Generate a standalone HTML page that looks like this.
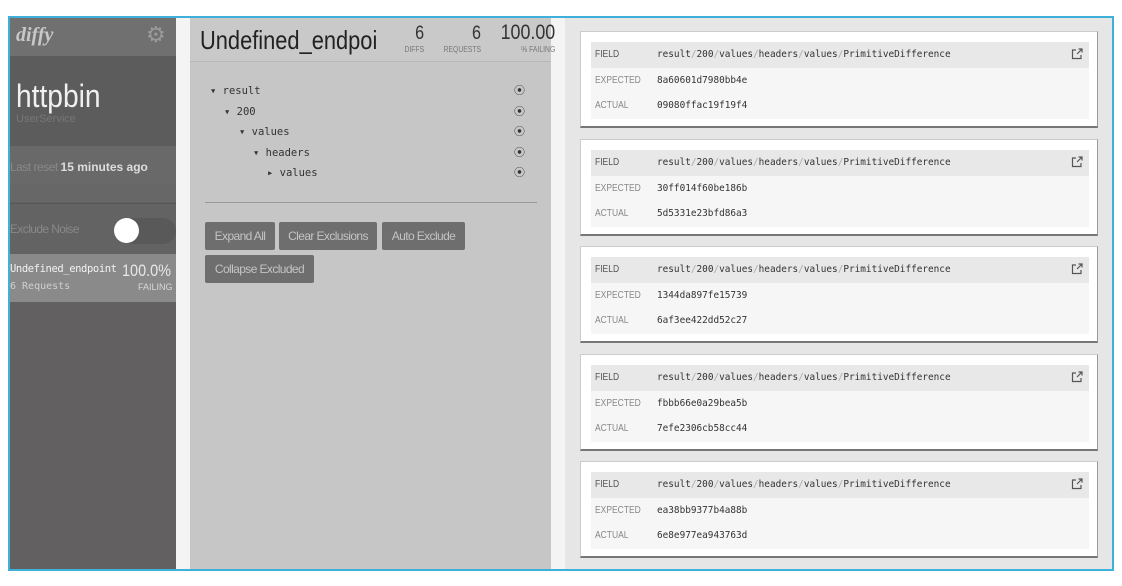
<!DOCTYPE html>
<html><head><meta charset="utf-8"><style>
*{box-sizing:border-box;margin:0;padding:0}
body{width:1122px;height:586px;background:#fff;position:relative;overflow:hidden;font-family:"Liberation Sans",sans-serif}
.frame{position:absolute;left:8px;top:16px;width:1106px;height:555px;border:2px solid #3fb0d8;background:#f4f4f4;overflow:hidden}
.abs{position:absolute}
.side{left:0;top:0;width:166px;height:553px;background:#626061}
.mid{left:180px;top:0;width:361px;height:553px;background:#c6c6c6}
.right{left:555px;top:0;width:549px;height:553px;background:#e6e6e6}
.mono{font-family:"DejaVu Sans Mono","Liberation Mono",monospace}
.btn{position:absolute;background:#6e6e6e;color:#c4c4c4;font-size:12px;letter-spacing:-0.6px;border-radius:2px;height:28px;line-height:28px;text-align:center}
.card{position:absolute;left:15px;width:518px;height:97px;background:#fff;border-bottom:2px solid #777;border-right:1px solid #999;border-left:1px solid #ccc;border-top:1px solid #ccc}
.tbl{position:absolute;left:10px;top:10px;width:498px;height:77px;background:#f6f6f6}
.row{position:absolute;left:0;width:498px;height:26px;line-height:26px;font-size:10px}
.lab{position:absolute;left:4px;color:#888;transform:scaleX(.85);transform-origin:left}
.val{position:absolute;left:66px;font-size:9.4px;color:#333}
.sl{color:#aaa}
.ic{position:absolute;right:6px;top:6px}
.n{font-size:19px;color:#333;transform:scaleX(.85);transform-origin:right}
.l{font-size:8px;color:#777;transform:scaleX(.85);transform-origin:right}
</style></head><body>
<div class="frame">
 <div class="abs side">
  <div class="abs" style="left:0;top:0;width:166px;height:38px;background:#717071"></div>
  <div class="abs" style="left:6px;top:6px;font-family:'Liberation Serif',serif;font-style:italic;font-weight:bold;font-size:20px;color:#c8c8c8">diffy</div>
  <div class="abs" style="left:136px;top:4px;font-size:22px;color:#9a9a9a">&#9881;</div>
  <div class="abs" style="left:0;top:38px;width:166px;height:90px;background:#5d5c5d"></div>
  <div class="abs" style="left:6px;top:60px;font-size:32px;color:#f0f0f0;transform:scaleX(.88);transform-origin:left">httpbin</div>
  <div class="abs" style="left:6px;top:95px;font-size:11px;color:#777">UserService</div>
  <div class="abs" style="left:0;top:128px;width:166px;height:38px;background:#6a696a"></div>
  <div class="abs" style="left:0;top:142px;font-size:12px;color:#888;letter-spacing:-0.5px">Last reset <b style="color:#ddd;letter-spacing:0">15 minutes ago</b></div>
  <div class="abs" style="left:0;top:166px;width:166px;height:18px;background:#686768"></div>
  <div class="abs" style="left:0;top:185px;width:166px;height:1px;background:#555"></div>
  <div class="abs" style="left:0;top:186px;width:166px;height:50px;background:#646364"></div>
  <div class="abs" style="left:0;top:204px;font-size:12px;color:#888;letter-spacing:-0.6px">Exclude Noise</div>
  <div class="abs" style="left:110px;top:200px;width:56px;height:26px;border-radius:13px;background:#5a595a"></div>
  <div class="abs" style="left:104px;top:200px;width:25px;height:25px;border-radius:50%;background:#fff"></div>
  <div class="abs" style="left:0;top:236px;width:166px;height:48px;background:#8b8a8b"></div>
  <div class="abs mono" style="left:0;top:245px;font-size:10.5px;color:#f2f2f2;letter-spacing:-0.4px">Undefined_endpoint</div>
  <div class="abs" style="left:112px;top:243px;font-size:17px;color:#e8e8e8;transform:scaleX(.85);transform-origin:left">100.0%</div>
  <div class="abs mono" style="left:0;top:263px;font-size:10px;color:#d0d0d0">6 Requests</div>
  <div class="abs" style="left:128px;top:264px;font-size:9px;color:#d8d8d8">FAILING</div>
 </div>
 <div class="abs mid">
  <div class="abs" style="left:0;top:0;width:361px;height:44px;background:#c9c9c9;border-bottom:1px solid #b8b8b8"></div>
  <div class="abs" style="left:10px;top:7px;font-size:26px;color:#222;transform:scaleX(.84);transform-origin:left">Undefined_endpoi</div>
  <div class="abs" style="right:127px;top:5px;text-align:right"><div class="n">6</div><div class="l">DIFFS</div></div>
  <div class="abs" style="right:70px;top:5px;text-align:right"><div class="n">6</div><div class="l">REQUESTS</div></div>
  <div class="abs" style="right:-4px;top:3px;text-align:right"><div class="n" style="font-size:21px">100.00</div><div class="l">% FAILING</div></div>
  <div class="abs mono" style="left:20px;top:63px;font-size:10.5px;color:#333;line-height:20.5px">
   <div>&#9662; result</div>
   <div style="padding-left:14px">&#9662; 200</div>
   <div style="padding-left:29px">&#9662; values</div>
   <div style="padding-left:43px">&#9662; headers</div>
   <div style="padding-left:57px">&#9656; values</div>
  </div>
  <div class="abs" style="left:324px;top:63px;font-size:11px;color:#333;line-height:20.5px">
   <div>&#10687;</div><div>&#10687;</div><div>&#10687;</div><div>&#10687;</div><div>&#10687;</div>
  </div>
  <div class="abs" style="left:15px;top:184px;width:332px;height:1px;background:#999"></div>
  <div class="btn" style="left:15px;top:204px;width:70px">Expand All</div>
  <div class="btn" style="left:89px;top:204px;width:98px">Clear Exclusions</div>
  <div class="btn" style="left:192px;top:204px;width:83px">Auto Exclude</div>
  <div class="btn" style="left:15px;top:237px;width:109px">Collapse Excluded</div>
 </div>
 <div class="abs right">
  <div class="card" style="top:13px"><div class="tbl">
   <div class="row" style="top:0;background:#e8e8e8"><span class="lab" style="color:#555">FIELD</span><span class="val mono">result<span class="sl">/</span>200<span class="sl">/</span>values<span class="sl">/</span>headers<span class="sl">/</span>values<span class="sl">/</span>PrimitiveDifference</span><svg class="ic" width="12" height="12" viewBox="0 0 12 12" fill="none" stroke="#555" stroke-width="1.2"><path d="M5 2H1.5v8.5H10V7"/><path d="M6 6l5-5M7.5 1H11v3.5" /></svg></div>
   <div class="row" style="top:26px"><span class="lab">EXPECTED</span><span class="val mono">8a60601d7980bb4e</span></div>
   <div class="row" style="top:51px"><span class="lab">ACTUAL</span><span class="val mono">09080ffac19f19f4</span></div>
  </div></div>
  <div class="card" style="top:121px"><div class="tbl">
   <div class="row" style="top:0;background:#e8e8e8"><span class="lab" style="color:#555">FIELD</span><span class="val mono">result<span class="sl">/</span>200<span class="sl">/</span>values<span class="sl">/</span>headers<span class="sl">/</span>values<span class="sl">/</span>PrimitiveDifference</span><svg class="ic" width="12" height="12" viewBox="0 0 12 12" fill="none" stroke="#555" stroke-width="1.2"><path d="M5 2H1.5v8.5H10V7"/><path d="M6 6l5-5M7.5 1H11v3.5" /></svg></div>
   <div class="row" style="top:26px"><span class="lab">EXPECTED</span><span class="val mono">30ff014f60be186b</span></div>
   <div class="row" style="top:51px"><span class="lab">ACTUAL</span><span class="val mono">5d5331e23bfd86a3</span></div>
  </div></div>
  <div class="card" style="top:228px"><div class="tbl">
   <div class="row" style="top:0;background:#e8e8e8"><span class="lab" style="color:#555">FIELD</span><span class="val mono">result<span class="sl">/</span>200<span class="sl">/</span>values<span class="sl">/</span>headers<span class="sl">/</span>values<span class="sl">/</span>PrimitiveDifference</span><svg class="ic" width="12" height="12" viewBox="0 0 12 12" fill="none" stroke="#555" stroke-width="1.2"><path d="M5 2H1.5v8.5H10V7"/><path d="M6 6l5-5M7.5 1H11v3.5" /></svg></div>
   <div class="row" style="top:26px"><span class="lab">EXPECTED</span><span class="val mono">1344da897fe15739</span></div>
   <div class="row" style="top:51px"><span class="lab">ACTUAL</span><span class="val mono">6af3ee422dd52c27</span></div>
  </div></div>
  <div class="card" style="top:336px"><div class="tbl">
   <div class="row" style="top:0;background:#e8e8e8"><span class="lab" style="color:#555">FIELD</span><span class="val mono">result<span class="sl">/</span>200<span class="sl">/</span>values<span class="sl">/</span>headers<span class="sl">/</span>values<span class="sl">/</span>PrimitiveDifference</span><svg class="ic" width="12" height="12" viewBox="0 0 12 12" fill="none" stroke="#555" stroke-width="1.2"><path d="M5 2H1.5v8.5H10V7"/><path d="M6 6l5-5M7.5 1H11v3.5" /></svg></div>
   <div class="row" style="top:26px"><span class="lab">EXPECTED</span><span class="val mono">fbbb66e0a29bea5b</span></div>
   <div class="row" style="top:51px"><span class="lab">ACTUAL</span><span class="val mono">7efe2306cb58cc44</span></div>
  </div></div>
  <div class="card" style="top:443px"><div class="tbl">
   <div class="row" style="top:0;background:#e8e8e8"><span class="lab" style="color:#555">FIELD</span><span class="val mono">result<span class="sl">/</span>200<span class="sl">/</span>values<span class="sl">/</span>headers<span class="sl">/</span>values<span class="sl">/</span>PrimitiveDifference</span><svg class="ic" width="12" height="12" viewBox="0 0 12 12" fill="none" stroke="#555" stroke-width="1.2"><path d="M5 2H1.5v8.5H10V7"/><path d="M6 6l5-5M7.5 1H11v3.5" /></svg></div>
   <div class="row" style="top:26px"><span class="lab">EXPECTED</span><span class="val mono">ea38bb9377b4a88b</span></div>
   <div class="row" style="top:51px"><span class="lab">ACTUAL</span><span class="val mono">6e8e977ea943763d</span></div>
  </div></div>
 </div>
</div>
</body></html>
